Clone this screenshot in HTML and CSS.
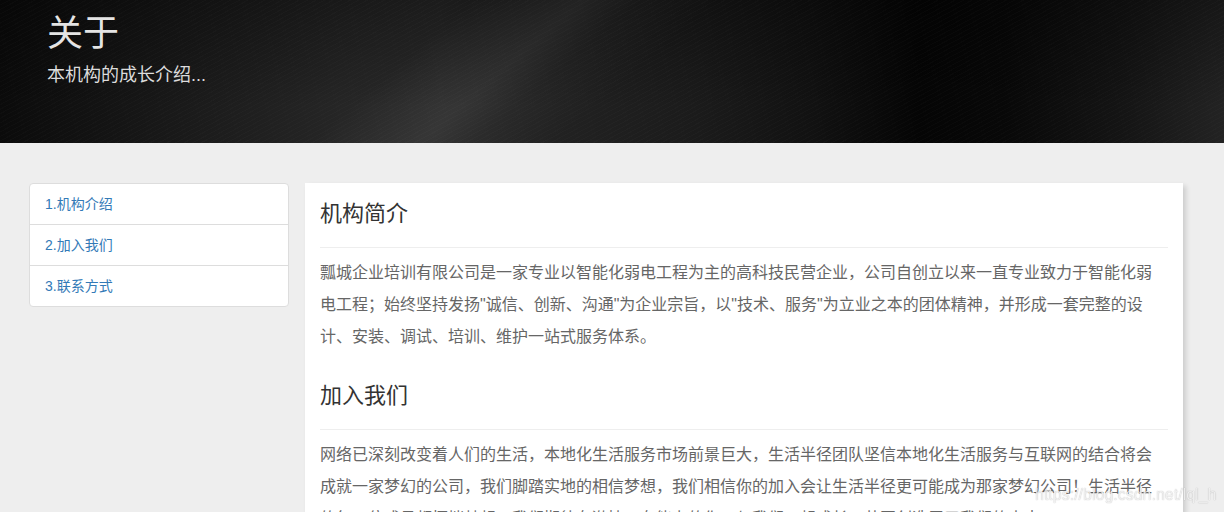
FILE: index.html
```html
<!DOCTYPE html>
<html lang="zh-CN">
<head>
<meta charset="utf-8">
<title>关于</title>
<link rel="stylesheet" href="styles.css">
</head>
<body>
<header class="banner">
  <h1 class="banner-title">关于</h1>
  <p class="banner-sub">本机构的成长介绍...</p>
</header>
<div class="page">
  <nav class="side-nav">
    <a class="side-item" href="#intro">1.机构介绍</a>
    <a class="side-item" href="#join">2.加入我们</a>
    <a class="side-item" href="#contact">3.联系方式</a>
  </nav>
  <main class="content">
    <section class="block" id="intro">
      <h2 class="block-title">机构简介</h2>
      <hr class="divider">
      <p class="block-text">瓢城企业培训有限公司是一家专业以智能化弱电工程为主的高科技民营企业，公司自创立以来一直专业致力于智能化弱电工程；始终坚持发扬"诚信、创新、沟通"为企业宗旨，以"技术、服务"为立业之本的团体精神，并形成一套完整的设计、安装、调试、培训、维护一站式服务体系。</p>
    </section>
    <section class="block" id="join">
      <h2 class="block-title">加入我们</h2>
      <hr class="divider">
      <p class="block-text">网络已深刻改变着人们的生活，本地化生活服务市场前景巨大，生活半径团队坚信本地化生活服务与互联网的结合将会成就一家梦幻的公司，我们脚踏实地的相信梦想，我们相信你的加入会让生活半径更可能成为那家梦幻公司！生活半径的每一位成员都怀揣梦想，我们期待有激情、有能力的你，与我们一起成长，共同创造属于我们的未来。</p>
    </section>
    <section class="block" id="contact">
      <h2 class="block-title">联系方式</h2>
      <hr class="divider">
      <p class="block-text">电话：0515-88888888　邮箱：hr@example.com</p>
    </section>
  </main>
</div>
<div class="watermark">https://blog.csdn.net/lql_h</div>
</body>
</html>
```

FILE: styles.css
```css
html {
  scrollbar-width: none;
}
html::-webkit-scrollbar {
  display: none;
}
body {
  margin: 0;
  background: #eeeeee;
  font-family: "Liberation Sans", "Noto Sans CJK SC", sans-serif;
  color: #333;
}

.banner {
  height: 143px;
  box-sizing: border-box;
  padding: 14px 47px 0;
  background:
    repeating-linear-gradient(152deg, rgba(255,255,255,0.014) 0 1px, rgba(0,0,0,0) 1px 4px),
    linear-gradient(139deg, rgba(255,255,255,0) 34%, rgba(255,255,255,0.06) 42%, rgba(255,255,255,0.02) 46%, rgba(255,255,255,0) 52%),
    linear-gradient(to bottom, rgba(0,0,0,0.35) 0%, rgba(0,0,0,0) 75%),
    linear-gradient(to right, #0b0b0b 0%, #1c1c1c 17%, #262626 28%, #2a2a2a 36%, #222 45%, #1b1b1b 57%, #121212 66%, #050505 75%, #080808 82%, #151515 92%, #232323 100%);
  color: #e2e2e2;
}
.banner-title {
  margin: 0;
  font-size: 36px;
  line-height: 40px;
  font-weight: normal;
  color: #e4e4e4;
}
.banner-sub {
  margin: 9px 0 0;
  font-size: 18px;
  line-height: 24px;
  color: #dcdcdc;
}

.page {
  display: flex;
  align-items: flex-start;
  gap: 16px;
  padding: 40px 0 0 29px;
}

.side-nav {
  width: 260px;
  box-sizing: border-box;
  flex: none;
  display: flex;
  flex-direction: column;
  background: #fff;
  border: 1px solid #ddd;
  border-radius: 4px;
}
.side-item {
  display: block;
  padding: 10px 15px;
  font-size: 14px;
  line-height: 20px;
  color: #337ab7;
  text-decoration: none;
  border-top: 1px solid #ddd;
}
.side-item:first-child {
  border-top: none;
}

.content {
  width: 878px;
  flex: none;
  box-sizing: border-box;
  padding: 15px 15px 30px;
  background: #fff;
  box-shadow: 3px 3px 5px rgba(0,0,0,0.14);
}
.block + .block {
  margin-top: 27px;
}
.block-title {
  margin: 0;
  font-size: 22px;
  line-height: 32px;
  font-weight: normal;
  color: #333;
}
.divider {
  margin: 17px 0 9px;
  border: 0;
  border-top: 1px solid #eee;
}
.block-text {
  margin: 0;
  padding-right: 12px;
  font-size: 16px;
  line-height: 32px;
  color: #666;
}

.watermark {
  position: fixed;
  left: 1035px;
  top: 484px;
  font-family: "Liberation Sans", sans-serif;
  font-size: 16px;
  line-height: 22px;
  color: rgba(255,255,255,0.8);
  text-shadow: 0 0 1px rgba(0,0,0,0.35);
  pointer-events: none;
}
```
